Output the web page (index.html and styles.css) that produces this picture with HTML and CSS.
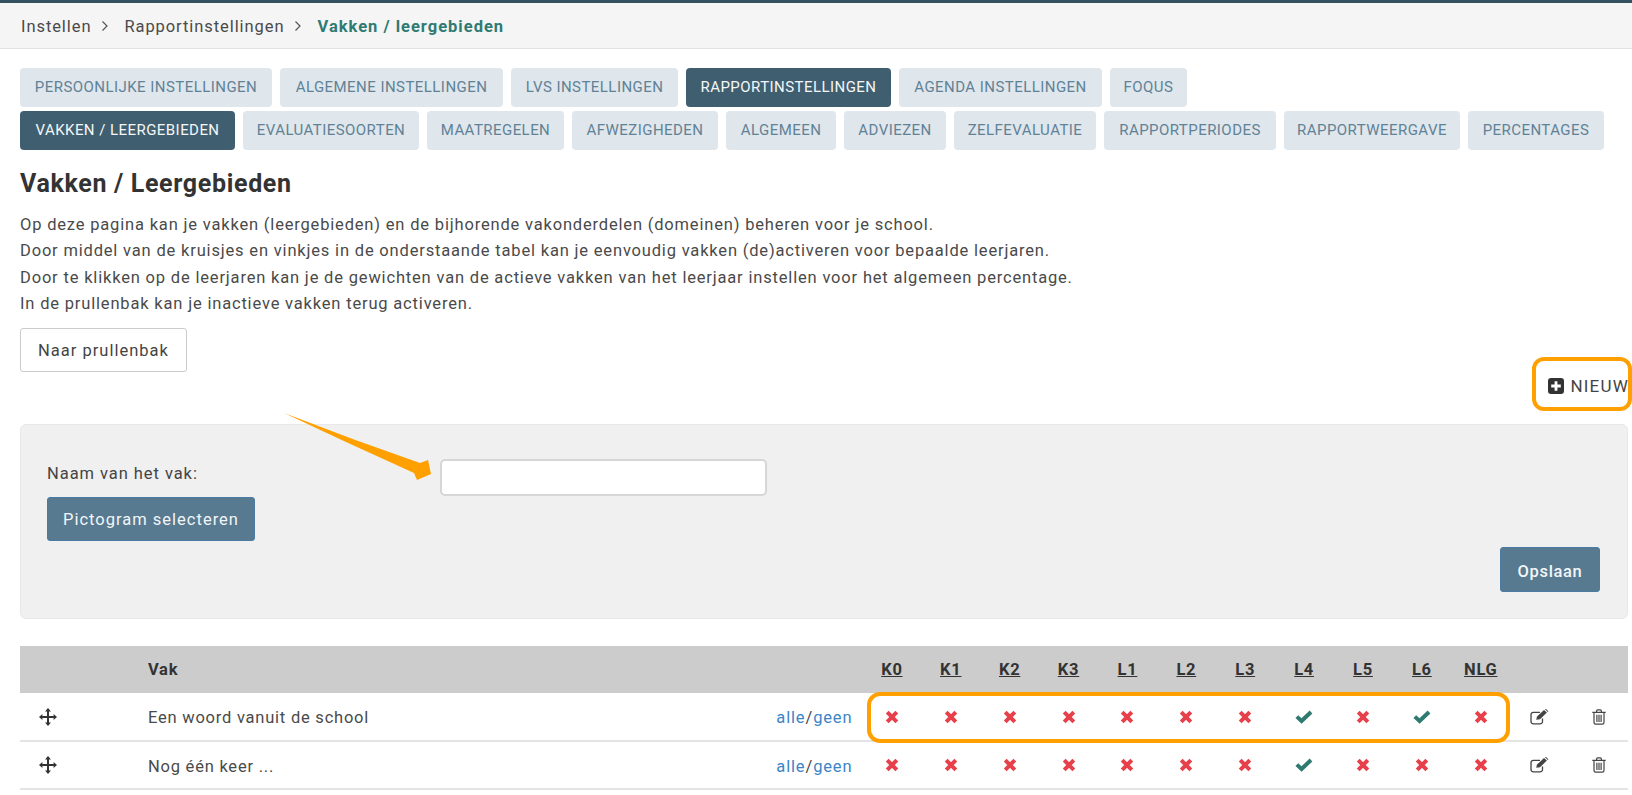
FILE: index.html
```html
<!DOCTYPE html>
<html lang="nl">
<head>
<meta charset="utf-8">
<title>Vakken / Leergebieden</title>
<link rel="stylesheet" href="styles.css">
</head>
<body>
<svg class="defs" width="0" height="0" aria-hidden="true">
  <symbol id="i-x" viewBox="0 0 14 14"><path d="M2.2 2.2 11.8 11.8M11.8 2.2 2.2 11.8" fill="none" stroke="currentColor" stroke-width="4"/></symbol>
  <symbol id="i-check" viewBox="0 0 18 14"><path d="M1.8 6.6 6.6 11 16 2" fill="none" stroke="currentColor" stroke-width="4"/></symbol>
  <symbol id="i-move" viewBox="0 0 18 18"><path d="M9 0 12 3.4H10V8H14.6V6L18 9 14.6 12V10H10V14.6H12L9 18 6 14.6H8V10H3.4V12L0 9 3.4 6V8H8V3.4H6Z" fill="currentColor"/></symbol>
  <symbol id="i-edit" viewBox="0 0 19 16"><path d="M12.5 9.5V12.5A2.3 2.3 0 0 1 10.2 14.8H3.3A2.3 2.3 0 0 1 1 12.5V5.6A2.3 2.3 0 0 1 3.3 3.3H10" fill="none" stroke="currentColor" stroke-width="1.3"/><path d="M6.2 10.8 7 7.6 14 .9 16.9 3.6 10 10.2Z M15 0 16 0 18.4 2.2 17.8 2.9 15 .3Z" fill="currentColor"/></symbol>
  <symbol id="i-trash" viewBox="0 0 14 16"><path d="M.3 3.3H13.7M2 3.3V13.6A1.6 1.6 0 0 0 3.6 15.2H10.4A1.6 1.6 0 0 0 12 13.6V3.3M4.6 3.3V1.9A1.1 1.1 0 0 1 5.7 .8H8.3A1.1 1.1 0 0 1 9.4 1.9V3.3M4.9 5.7V12.9M7 5.7V12.9M9.1 5.7V12.9" fill="none" stroke="currentColor" stroke-width="1.2"/></symbol>
  <symbol id="i-plus" viewBox="0 0 16 16"><path d="M3 0H13A3 3 0 0 1 16 3V13A3 3 0 0 1 13 16H3A3 3 0 0 1 0 13V3A3 3 0 0 1 3 0ZM6.6 3.2V6.6H3.2V9.4H6.6V12.8H9.4V9.4H12.8V6.6H9.4V3.2Z" fill="currentColor" fill-rule="evenodd"/></symbol>
</svg>

<nav class="crumbs">
  <a class="crumb">Instellen</a>
  <svg class="chev" viewBox="0 0 8 12"><path d="M1.5 1.5 6 6 1.5 10.5" fill="none" stroke="currentColor" stroke-width="1.2"/></svg>
  <a class="crumb">Rapportinstellingen</a>
  <svg class="chev" viewBox="0 0 8 12"><path d="M1.5 1.5 6 6 1.5 10.5" fill="none" stroke="currentColor" stroke-width="1.2"/></svg>
  <a class="crumb current">Vakken / leergebieden</a>
</nav>

<main class="main">
  <div class="tabs tabs-top">
    <a class="tab">PERSOONLIJKE INSTELLINGEN</a>
    <a class="tab">ALGEMENE INSTELLINGEN</a>
    <a class="tab">LVS INSTELLINGEN</a>
    <a class="tab active">RAPPORTINSTELLINGEN</a>
    <a class="tab">AGENDA INSTELLINGEN</a>
    <a class="tab">FOQUS</a>
  </div>
  <div class="tabs tabs-sub">
    <a class="tab active">VAKKEN / LEERGEBIEDEN</a>
    <a class="tab">EVALUATIESOORTEN</a>
    <a class="tab">MAATREGELEN</a>
    <a class="tab">AFWEZIGHEDEN</a>
    <a class="tab">ALGEMEEN</a>
    <a class="tab">ADVIEZEN</a>
    <a class="tab">ZELFEVALUATIE</a>
    <a class="tab">RAPPORTPERIODES</a>
    <a class="tab">RAPPORTWEERGAVE</a>
    <a class="tab">PERCENTAGES</a>
  </div>

  <h1 class="title">Vakken / Leergebieden</h1>
  <p class="intro">Op deze pagina kan je vakken (leergebieden) en de bijhorende vakonderdelen (domeinen) beheren voor je school.<br>
  Door middel van de kruisjes en vinkjes in de onderstaande tabel kan je eenvoudig vakken (de)activeren voor bepaalde leerjaren.<br>
  Door te klikken op de leerjaren kan je de gewichten van de actieve vakken van het leerjaar instellen voor het algemeen percentage.<br>
  In de prullenbak kan je inactieve vakken terug activeren.</p>

  <button class="btn btn-plain">Naar prullenbak</button>

  <div class="new-row">
    <a class="new"><svg class="new-icon"><use href="#i-plus"/></svg>NIEUW</a>
  </div>

  <form class="panel">
    <div class="field">
      <label class="label">Naam van het vak:</label>
      <input class="input" type="text">
    </div>
    <div><button type="button" class="btn btn-blue btn-picto">Pictogram selecteren</button></div>
    <div class="panel-foot"><button type="button" class="btn btn-blue btn-save">Opslaan</button></div>
  </form>

  <table class="grid">
    <colgroup>
      <col class="c-move"><col class="c-name"><col class="c-all">
      <col class="c-y"><col class="c-y"><col class="c-y"><col class="c-y"><col class="c-y"><col class="c-y"><col class="c-y"><col class="c-y"><col class="c-y"><col class="c-y"><col class="c-y">
      <col class="c-y"><col class="c-y">
    </colgroup>
    <thead>
      <tr>
        <th></th><th class="left">Vak</th><th></th>
        <th><u>K0</u></th><th><u>K1</u></th><th><u>K2</u></th><th><u>K3</u></th><th><u>L1</u></th><th><u>L2</u></th><th><u>L3</u></th><th><u>L4</u></th><th><u>L5</u></th><th><u>L6</u></th><th><u>NLG</u></th>
        <th></th><th></th>
      </tr>
    </thead>
    <tbody>
      <tr>
        <td><svg class="i-move"><use href="#i-move"/></svg></td>
        <td class="left">Een woord vanuit de school</td>
        <td class="all"><a class="lnk">alle</a>/<a class="lnk">geen</a></td>
        <td><svg class="i-x"><use href="#i-x"/></svg></td>
        <td><svg class="i-x"><use href="#i-x"/></svg></td>
        <td><svg class="i-x"><use href="#i-x"/></svg></td>
        <td><svg class="i-x"><use href="#i-x"/></svg></td>
        <td><svg class="i-x"><use href="#i-x"/></svg></td>
        <td><svg class="i-x"><use href="#i-x"/></svg></td>
        <td><svg class="i-x"><use href="#i-x"/></svg></td>
        <td><svg class="i-check"><use href="#i-check"/></svg></td>
        <td><svg class="i-x"><use href="#i-x"/></svg></td>
        <td><svg class="i-check"><use href="#i-check"/></svg></td>
        <td><svg class="i-x"><use href="#i-x"/></svg></td>
        <td><svg class="i-edit"><use href="#i-edit"/></svg></td>
        <td><svg class="i-trash"><use href="#i-trash"/></svg></td>
      </tr>
      <tr>
        <td><svg class="i-move"><use href="#i-move"/></svg></td>
        <td class="left">Nog één keer ...</td>
        <td class="all"><a class="lnk">alle</a>/<a class="lnk">geen</a></td>
        <td><svg class="i-x"><use href="#i-x"/></svg></td>
        <td><svg class="i-x"><use href="#i-x"/></svg></td>
        <td><svg class="i-x"><use href="#i-x"/></svg></td>
        <td><svg class="i-x"><use href="#i-x"/></svg></td>
        <td><svg class="i-x"><use href="#i-x"/></svg></td>
        <td><svg class="i-x"><use href="#i-x"/></svg></td>
        <td><svg class="i-x"><use href="#i-x"/></svg></td>
        <td><svg class="i-check"><use href="#i-check"/></svg></td>
        <td><svg class="i-x"><use href="#i-x"/></svg></td>
        <td><svg class="i-x"><use href="#i-x"/></svg></td>
        <td><svg class="i-x"><use href="#i-x"/></svg></td>
        <td><svg class="i-edit"><use href="#i-edit"/></svg></td>
        <td><svg class="i-trash"><use href="#i-trash"/></svg></td>
      </tr>
    </tbody>
  </table>
</main>

<div class="mark mark-new"></div>
<div class="mark mark-row"></div>
<svg class="arrow" viewBox="0 0 150 70"><path d="M0 0 70 26.5 136 50 144 47 147 61 133 67 130 60 62 29Z" fill="#ffa000"/></svg>
</body>
</html>
```

FILE: styles.css
```css
* { box-sizing: border-box; }
html, body { margin: 0; padding: 0; background: #fff; }
body {
  position: relative;
  min-height: 795px;
  overflow: hidden;
  font-family: Roboto, "Liberation Sans", sans-serif;
  font-size: 16.5px;
  color: #444;
  border-top: 3px solid #34515f;
}
.defs { position: absolute; }

.crumbs {
  display: flex;
  align-items: center;
  height: 46px;
  padding: 1px 0 0 21px;
  background: #f5f5f5;
  border-bottom: 1px solid #e2e2e2;
  letter-spacing: .92px;
  color: #4a4a4a;
}
.chev { width: 8px; height: 12px; margin: 0 15px 0 10px; color: #555; }
.current { font-weight: 700; color: #2f7a72; letter-spacing: 1px; }

.main { padding: 19px 4px 0 20px; }
.tabs { display: grid; gap: 8px; margin-bottom: 4px; }
.tabs-top { grid-template-columns: 252px 223px 167px 205px 203px 77px; }
.tabs-sub { grid-template-columns: 215px 176px 137px 146px 110px 102px 142px 172px 176px 136px; }
.tab {
  display: block;
  height: 39px;
  line-height: 39px;
  border-radius: 4px;
  background: #dfe6ec;
  color: #5f8296;
  font-size: 15px;
  letter-spacing: .45px;
  text-align: center;
  white-space: nowrap;
}
.tab.active { background: #3f5f70; color: #f4f6f7; }

.title { margin: 19px 0 0; font-size: 25px; line-height: 30px; font-weight: 700; color: #333; letter-spacing: .66px; }
.intro { margin: 13px 0 0; line-height: 26.3px; color: #4a4a4a; letter-spacing: .82px; }

.btn {
  display: block;
  font: inherit;
  border-radius: 3px;
  letter-spacing: 1px;
  cursor: pointer;
}
.btn-plain { margin-top: 11px; width: 167px; height: 44px; padding-top: 2px; background: #fff; border: 1px solid #ccc; color: #444; }
.btn-blue { background: #577a91; border: 1px solid #4a7ba3; color: #f2f5f7; }
.btn-picto { width: 208px; height: 44px; padding-top: 2px; }
.btn-save { width: 100px; height: 45px; padding-top: 4px; font-weight: 500; letter-spacing: .65px; }

.new-row { display: flex; justify-content: flex-end; height: 52px; padding-top: 4px; }
.new { display: flex; align-items: center; height: 20px; margin-right: -1px; color: #444; font-size: 17px; letter-spacing: 1.2px; }
.new-icon { width: 16px; height: 16px; margin-right: 6px; color: #333; }

.panel {
  height: 195px;
  padding: 34px 27px 0 26px;
  background: #f0f0f0;
  border: 1px solid #e8e8e8;
  border-radius: 6px;
}
.field { display: flex; align-items: flex-start; height: 38px; }
.label { width: 393px; margin-top: 3px; line-height: 24px; letter-spacing: .94px; }
.input { width: 327px; height: 37px; background: #fff; border: 2px solid #d6d6d6; border-radius: 5px; }
.panel-foot { display: flex; justify-content: flex-end; margin-top: 6px; }

.grid { width: 1608px; margin-top: 27px; border-collapse: collapse; table-layout: fixed; }
.c-move { width: 56px; }
.c-name { width: auto; }
.c-all { width: 214px; }
.c-y { width: 58.9px; }
.grid th { height: 47px; padding: 0; background: #ccc; color: #333; font-weight: 700; text-align: center; letter-spacing: .7px; }
.grid td { height: 48px; padding: 0; text-align: center; border-bottom: 2px solid #e4e4e4; color: #4a4a4a; letter-spacing: .77px; }
.grid td svg { display: block; margin: 0 auto; }
.grid .left { text-align: left; padding-left: 72px; }
.grid td.left { padding-top: 2px; }
.grid .all { text-align: right; padding: 2px 10px 0 0; letter-spacing: .85px; }
.lnk { color: #3d85c6; }

.i-x { width: 14px; height: 14px; color: #e8404a; }
.i-check { width: 18px; height: 14px; color: #2f7a70; }
.i-move { width: 18px; height: 18px; color: #333; }
.i-edit { width: 19px; height: 16px; color: #444; }
.i-trash { width: 14px; height: 16px; color: #444; }

.mark { position: absolute; border: 4px solid #ffa000; pointer-events: none; }
.mark-new { left: 1532px; top: 354px; width: 100px; height: 54px; border-radius: 12px; }
.mark-row { left: 867px; top: 689px; width: 643px; height: 51px; border-radius: 13px; }
.arrow { position: absolute; left: 284px; top: 410px; width: 150px; height: 70px; }
```
